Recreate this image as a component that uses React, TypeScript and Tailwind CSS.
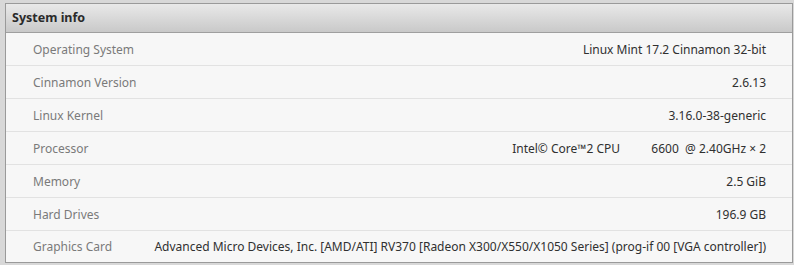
import React from "react";

const rows: { label: string; value: string }[] = [
  { label: "Operating System", value: "Linux Mint 17.2 Cinnamon 32-bit" },
  { label: "Cinnamon Version", value: "2.6.13" },
  { label: "Linux Kernel", value: "3.16.0-38-generic" },
  { label: "Processor", value: "Intel\u00a9 Core\u21222 CPU          6600  @ 2.40GHz \u00d7 2" },
  { label: "Memory", value: "2.5 GiB" },
  { label: "Hard Drives", value: "196.9 GB" },
  {
    label: "Graphics Card",
    value:
      "Advanced Micro Devices, Inc. [AMD/ATI] RV370 [Radeon X300/X550/X1050 Series] (prog-if 00 [VGA controller])",
  },
];

export default function App() {
  return (
    <div
      className="w-[794px] h-[265px] bg-[#d8d8d8] pt-[3px] pl-[5px] overflow-hidden"
      style={{ fontFamily: '"Noto Sans", "Open Sans", sans-serif' }}
    >
      <div className="w-[788px] border border-[#9a9a9a] bg-[#f7f7f7]">
        <div className="h-[29px] flex items-center pl-[6px] bg-gradient-to-b from-[#e9e9e9] to-[#c9c9c9] border-b border-[#9f9f9f] text-[12.5px] font-bold text-[#2a2a2a]">
          System info
        </div>
        {rows.map((r, i) => (
          <div
            key={r.label}
            className={
              "flex items-center justify-between pl-[27px] pr-[26px] pt-[1px] text-[12px] " +
              (i < rows.length - 1 ? "h-[33px] border-b border-[#e2e2e2]" : "h-[31px]")
            }
          >
            <span className="text-[#7a7a7a] whitespace-nowrap">{r.label}</span>
            <span className="text-[#303030] whitespace-pre">{r.value}</span>
          </div>
        ))}
      </div>
    </div>
  );
}
